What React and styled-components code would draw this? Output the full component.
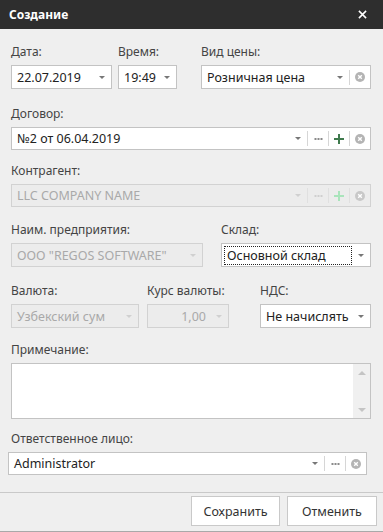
import React from 'react'
import styled, { createGlobalStyle } from 'styled-components'

const Global = createGlobalStyle`
  html, body {
    margin: 0;
    padding: 0;
    background: #efefef;
  }
  body {
    font-family: "Noto Sans", "Open Sans", sans-serif;
  }
`

const Window = styled.div`
  width: 383px;
  height: 532px;
  box-sizing: border-box;
  display: flex;
  flex-direction: column;
  background: #efefef;
  border-bottom: 1px solid #a9a9a9;
`

const TitleBar = styled.div`
  height: 29px;
  flex: none;
  background: #2e2e2e;
  display: flex;
  align-items: center;
  justify-content: space-between;
  padding: 0 16px 0 9px;
  color: #fff;
  font-size: 12px;
  font-weight: bold;
`

const Body = styled.div`
  flex: 1;
  padding: 0 12px 0 11px;
`

const Row = styled.div`
  display: flex;
  margin-top: ${p => p.$mt}px;
  margin-left: ${p => p.$ml || 0}px;
`

const Field = styled.div`
  display: flex;
  flex-direction: column;
  width: ${p => (p.$w ? p.$w + 'px' : 'auto')};
  flex: ${p => (p.$w ? 'none' : '1')};
  margin-right: ${p => p.$gap || 0}px;
`

const Label = styled.div`
  height: 16px;
  line-height: 16px;
  font-size: 12px;
  color: #444;
  margin-bottom: 5px;
  margin-left: ${p => p.$ml || 0}px;
  white-space: nowrap;
`

const Box = styled.div`
  height: ${p => p.$h || 23}px;
  box-sizing: border-box;
  border: 1px solid ${p => (p.$off ? '#d2d2d2' : '#c3c3c3')};
  background: ${p => (p.$off ? '#ececec' : '#fff')};
  display: flex;
  align-items: center;
`

const Value = styled.div`
  flex: 1;
  min-width: 0;
  font-size: 12.5px;
  color: ${p => (p.$off ? '#a9a9a9' : '#222')};
  padding-left: 5px;
  text-align: ${p => (p.$right ? 'right' : 'left')};
  padding-right: ${p => (p.$right ? 4 : 0)}px;
  white-space: nowrap;
  overflow: hidden;
`

const Focus = styled.span`
  display: block;
  border: 1px dotted #222;
  padding: 1px 2px;
  margin-left: -3px;
  line-height: 15px;
`

const ArrowZone = styled.div`
  width: 18px;
  height: 100%;
  display: flex;
  align-items: center;
  justify-content: center;
  &::after {
    content: "";
    border-left: 3px solid transparent;
    border-right: 3px solid transparent;
    border-top: 3px solid ${p => (p.$off ? '#d0d0d0' : '#777')};
  }
`

const Sep = styled.div`
  width: 1px;
  height: 15px;
  background: ${p => (p.$off ? '#e0e0e0' : '#d6d6d6')};
`

const Btn = styled.div`
  width: 20px;
  height: 100%;
  display: flex;
  align-items: center;
  justify-content: center;
`

const Memo = styled(Box)`
  align-items: stretch;
  justify-content: flex-end;
`

const Scroll = styled.div`
  width: 17px;
  background: #f0f0f0;
  display: flex;
  flex-direction: column;
  justify-content: space-between;
  align-items: center;
  padding: 7px 0 6px;
`

const ScrollArrow = styled.div`
  border-left: 4px solid transparent;
  border-right: 4px solid transparent;
  ${p => (p.$down ? 'border-top' : 'border-bottom')}: 4px solid #c4c4c4;
`

const Footer = styled.div`
  flex: none;
  border-top: 1px solid #c9c9c9;
  display: flex;
  justify-content: flex-end;
  gap: 7px;
  padding: 3px 6px 5px 0;
`

const Button = styled.div`
  width: ${p => p.$w}px;
  height: 30px;
  box-sizing: border-box;
  background: #fff;
  border: 1px solid #c9c9c9;
  display: flex;
  align-items: center;
  justify-content: center;
  font-size: 12.5px;
  color: #333;
`

const Clear = ({ off }) => (
  <svg width="10" height="10" viewBox="0 0 10 10">
    <circle cx="5" cy="5" r="5" fill={off ? '#c8c8c8' : '#b4b4b4'} />
    <path d="M3.2 3.2 L6.8 6.8 M6.8 3.2 L3.2 6.8" stroke="#fff" strokeWidth="1.4" />
  </svg>
)

const Dots = ({ off }) => (
  <svg width="9" height="2" viewBox="0 0 9 2">
    {[0.5, 3.5, 6.5].map(x => (
      <rect key={x} x={x} y="0" width="2" height="2" fill={off ? '#cfcfcf' : '#8a8a8a'} />
    ))}
  </svg>
)

const Plus = ({ off }) => (
  <svg width="10" height="10" viewBox="0 0 10 10">
    <path d="M5 0 V10 M0 5 H10" stroke={off ? '#a9e4bb' : '#3f7a4d'} strokeWidth="2" />
  </svg>
)

const Close = () => (
  <svg width="9" height="9" viewBox="0 0 10 10">
    <path d="M1 1 L9 9 M9 1 L1 9" stroke="#fff" strokeWidth="1.7" />
  </svg>
)

const Select = ({ value, off, dots, plus, clear, right, focus, h }) => (
  <Box $off={off} $h={h}>
    <Value $off={off} $right={right}>{focus ? <Focus>{value}</Focus> : value}</Value>
    <ArrowZone $off={off} />
    {dots && <><Sep $off={off} /><Btn><Dots off={off} /></Btn></>}
    {plus && <><Sep $off={off} /><Btn><Plus off={off} /></Btn></>}
    {clear && <><Sep $off={off} /><Btn><Clear off={off} /></Btn></>}
  </Box>
)

export default function App() {
  return (
    <Window>
      <Global />
      <TitleBar>
        <span>Создание</span>
        <Close />
      </TitleBar>
      <Body>
        <Row $mt={15}>
          <Field $w={101} $gap={6}>
            <Label>Дата:</Label>
            <Select value="22.07.2019" h={24} />
          </Field>
          <Field $w={59} $gap={24}>
            <Label>Время:</Label>
            <Select value="19:49" h={24} />
          </Field>
          <Field>
            <Label>Вид цены:</Label>
            <Select value="Розничная цена" clear h={24} />
          </Field>
        </Row>
        <Row $mt={17}>
          <Field>
            <Label>Договор:</Label>
            <Select value="№2 от 06.04.2019" dots plus clear />
          </Field>
        </Row>
        <Row $mt={13}>
          <Field>
            <Label>Контрагент:</Label>
            <Select value="LLC COMPANY NAME" off dots plus clear />
          </Field>
        </Row>
        <Row $mt={15}>
          <Field $w={192} $gap={18}>
            <Label>Наим. предприятия:</Label>
            <Select value='ООО "REGOS SOFTWARE"' off h={24} />
          </Field>
          <Field>
            <Label>Склад:</Label>
            <Select value="Основной склад" focus h={24} />
          </Field>
        </Row>
        <Row $mt={16}>
          <Field $w={128} $gap={8}>
            <Label>Валюта:</Label>
            <Select value="Узбекский сум" off h={24} />
          </Field>
          <Field $w={82} $gap={31}>
            <Label>Курс валюты:</Label>
            <Select value="1,00" off right h={24} />
          </Field>
          <Field>
            <Label>НДС:</Label>
            <Select value="Не начислять" h={24} />
          </Field>
        </Row>
        <Row $mt={14}>
          <Field>
            <Label>Примечание:</Label>
            <Memo $h={56}>
              <Scroll>
                <ScrollArrow />
                <ScrollArrow $down />
              </Scroll>
            </Memo>
          </Field>
        </Row>
        <Row $mt={12} $ml={-3}>
          <Field $w={359}>
            <Label $ml={3}>Ответственное лицо:</Label>
            <Select value="Administrator" dots clear />
          </Field>
        </Row>
      </Body>
      <Footer>
        <Button $w={89}>Сохранить</Button>
        <Button $w={90}>Отменить</Button>
      </Footer>
    </Window>
  )
}
